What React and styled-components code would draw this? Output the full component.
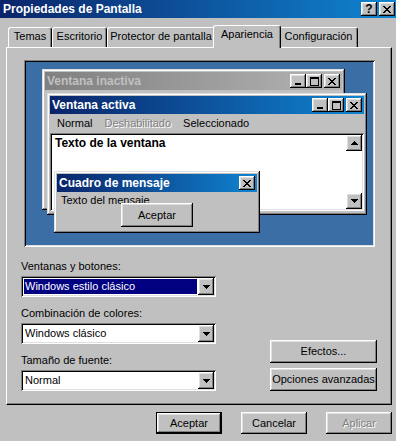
import React from "react";
import styled, { createGlobalStyle, css } from "styled-components";

const GlobalStyle = createGlobalStyle`
  html, body { margin: 0; padding: 0; background: #c0c0c0; }
  body {
    font-family: "Liberation Sans", Arial, sans-serif;
    font-size: 11px;
    line-height: 13px;
    color: #000;
  }
  * { box-sizing: border-box; }
`;

const raisedBevel = css`
  box-shadow: inset -1px -1px #000, inset 1px 1px #fff, inset -2px -2px #808080,
    inset 2px 2px #dfdfdf;
`;
const windowBevel = css`
  box-shadow: inset -1px -1px #000, inset 1px 1px #dfdfdf, inset -2px -2px #808080,
    inset 2px 2px #fff;
`;
const sunkenBevel = css`
  box-shadow: inset 1px 1px #808080, inset -1px -1px #fff, inset 2px 2px #000,
    inset -2px -2px #dfdfdf;
`;

const Dialog = styled.div`
  width: 396px;
  height: 441px;
  overflow: hidden;
  background: #c0c0c0;
  display: flex;
  flex-direction: column;
`;

const TitleBar = styled.div`
  height: 18px;
  flex: none;
  display: flex;
  align-items: center;
  padding: 0 1px 0 3px;
  background: linear-gradient(to right, #0a246a 0%, #1084d0 100%);
`;

const TitleText = styled.div`
  flex: 1;
  color: #fff;
  font-weight: bold;
  font-size: 12px;
  line-height: 14px;
  white-space: nowrap;
`;

const CapButton = styled.div`
  flex: none;
  width: 16px;
  height: 14px;
  margin-left: ${(p) => p.$gap || 0}px;
  background: #c0c0c0;
  ${raisedBevel}
  display: flex;
  align-items: center;
  justify-content: center;
  font-weight: bold;
  font-size: 12px;
  line-height: 12px;
  color: #000;
`;

const TabRow = styled.div`
  flex: none;
  position: relative;
  z-index: 1;
  display: flex;
  align-items: flex-end;
  height: 23px;
  margin-top: 7px;
  padding-left: 8px;
`;

const Tab = styled.div`
  position: relative;
  z-index: ${(p) => (p.$active ? 2 : 1)};
  width: ${(p) => p.$w}px;
  height: ${(p) => (p.$active ? 23 : 20)}px;
  margin: 0 ${(p) => (p.$active ? -2 : 0)}px ${(p) => (p.$active ? 0 : 1)}px;
  padding-top: 2px;
  background: #c0c0c0;
  border-top: 1px solid #fff;
  border-left: 1px solid #fff;
  border-right: 1px solid #000;
  border-radius: 3px 3px 0 0;
  box-shadow: inset -1px 0 #808080;
  text-align: center;
  white-space: nowrap;
`;

const Panel = styled.div`
  flex: none;
  margin: -1px 0 0 6px;
  width: 386px;
  height: 358px;
  border-top: 1px solid #fff;
  border-left: 1px solid #fff;
  border-right: 1px solid #000;
  border-bottom: 1px solid #000;
  box-shadow: inset -1px -1px #808080;
  display: flex;
  flex-direction: column;
`;

const Preview = styled.div`
  flex: none;
  position: relative;
  margin: 12px 0 0 17px;
  width: 351px;
  height: 187px;
  background: #3a6ea5;
  ${sunkenBevel}
`;

const PreviewWindow = styled.div`
  position: absolute;
  left: ${(p) => p.$x}px;
  top: ${(p) => p.$y}px;
  width: ${(p) => p.$w}px;
  height: ${(p) => p.$h}px;
  background: #c0c0c0;
  padding: 3px;
  display: flex;
  flex-direction: column;
  ${windowBevel}
`;

const Caption = styled.div`
  flex: none;
  height: 18px;
  display: flex;
  align-items: center;
  padding: 0 2px 0 2px;
  background: ${(p) =>
    p.$inactive
      ? "linear-gradient(to right, #808080 0%, #b4b4b4 100%)"
      : "linear-gradient(to right, #0a246a 0%, #1084d0 100%)"};
  color: ${(p) => (p.$inactive ? "#c0c0c0" : "#fff")};
  font-weight: bold;
  font-size: 12px;
  line-height: 14px;
  white-space: nowrap;
`;

const CaptionText = styled.div`
  flex: 1;
  overflow: hidden;
`;

const MenuBar = styled.div`
  flex: none;
  height: 18px;
  display: flex;
  align-items: center;
  padding-left: 1px;
`;

const MenuItem = styled.div`
  padding: 0 6px;
  color: ${(p) => (p.$disabled ? "#808080" : "#000")};
  text-shadow: ${(p) => (p.$disabled ? "1px 1px #fff" : "none")};
`;

const TextArea = styled.div`
  flex: 1;
  margin: 1px 0;
  padding: 2px;
  background: #fff;
  display: flex;
  ${sunkenBevel}
`;

const WindowText = styled.div`
  flex: 1;
  padding: 1px 3px;
  font-weight: bold;
  font-size: 12px;
  line-height: 14px;
`;

const ScrollColumn = styled.div`
  flex: none;
  width: 16px;
  display: flex;
  flex-direction: column;
  justify-content: space-between;
`;

const ScrollButton = styled.div`
  width: 16px;
  height: 16px;
  background: #c0c0c0;
  display: flex;
  align-items: center;
  justify-content: center;
  ${raisedBevel}
`;

const MessageBody = styled.div`
  flex: 1;
  display: flex;
  flex-direction: column;
  align-items: center;
`;

const MessageText = styled.div`
  align-self: stretch;
  margin-top: 2px;
  padding-left: 4px;
  white-space: nowrap;
`;

const Button = styled.div`
  flex: none;
  width: ${(p) => p.$w}px;
  height: ${(p) => p.$h}px;
  margin-top: ${(p) => p.$mt || 0}px;
  background: #c0c0c0;
  display: flex;
  align-items: center;
  justify-content: center;
  white-space: nowrap;
  color: ${(p) => (p.$disabled ? "#808080" : "#000")};
  text-shadow: ${(p) => (p.$disabled ? "1px 1px #fff" : "none")};
  ${(p) =>
    p.$default
      ? css`
          box-shadow: inset 0 0 0 1px #000, inset -2px -2px #000, inset 2px 2px #fff,
            inset -3px -3px #808080, inset 3px 3px #dfdfdf;
        `
      : raisedBevel}
`;

const Lower = styled.div`
  flex: none;
  display: grid;
  grid-template-columns: 195px 107px;
  column-gap: 54px;
  align-items: end;
  margin: 13px 0 0 14px;
`;

const FieldColumn = styled.div`
  display: flex;
  flex-direction: column;
  gap: 10px;
`;

const Field = styled.div`
  display: flex;
  flex-direction: column;
  gap: 3px;
`;

const Label = styled.div`
  white-space: nowrap;
`;

const Combo = styled.div`
  height: 21px;
  padding: 2px;
  background: #fff;
  display: flex;
  ${sunkenBevel}
`;

const ComboValue = styled.div`
  flex: 1;
  margin: 1px 1px 1px 1px;
  padding-left: 1px;
  display: flex;
  align-items: center;
  background: ${(p) => (p.$selected ? "#000080" : "transparent")};
  color: ${(p) => (p.$selected ? "#fff" : "#000")};
  white-space: nowrap;
`;

const DropButton = styled.div`
  flex: none;
  width: 16px;
  height: 17px;
  background: #c0c0c0;
  display: flex;
  align-items: center;
  justify-content: center;
  ${raisedBevel}
`;

const ButtonColumn = styled.div`
  display: flex;
  flex-direction: column;
  gap: 5px;
`;

const Footer = styled.div`
  flex: none;
  display: flex;
  justify-content: flex-end;
  gap: 19px;
  padding: 7px 4px 0 0;
`;

const CloseGlyph = () => (
  <svg width="8" height="7" viewBox="0 0 8 7">
    <path
      fill="#000"
      d="M0 0h2v1H0zM6 0h2v1H6zM1 1h2v1H1zM5 1h2v1H5zM2 2h4v1H2zM3 3h2v1H3zM2 4h4v1H2zM1 5h2v1H1zM5 5h2v1H5zM0 6h2v1H0zM6 6h2v1H6z"
    />
  </svg>
);

const MinGlyph = () => (
  <svg width="8" height="9" viewBox="0 0 8 9">
    <rect x="1" y="6" width="6" height="2" fill="#000" />
  </svg>
);

const MaxGlyph = () => (
  <svg width="9" height="9" viewBox="0 0 9 9">
    <path fill="#000" fillRule="evenodd" d="M0 0h9v9H0zM1 2h7v6H1z" />
  </svg>
);

const DownGlyph = () => (
  <svg width="7" height="4" viewBox="0 0 7 4">
    <path fill="#000" d="M0 0h7v1H0zM1 1h5v1H1zM2 2h3v1H2zM3 3h1v1H3z" />
  </svg>
);

const UpGlyph = () => (
  <svg width="7" height="4" viewBox="0 0 7 4">
    <path fill="#000" d="M3 0h1v1H3zM2 1h3v1H2zM1 2h5v1H1zM0 3h7v1H0z" />
  </svg>
);

const tabs = [
  { label: "Temas", w: 44 },
  { label: "Escritorio", w: 55 },
  { label: "Protector de pantalla", w: 108 },
  { label: "Apariencia", w: 68, active: true },
  { label: "Configuración", w: 79 },
];

const fields = [
  { label: "Ventanas y botones:", value: "Windows estilo clásico", selected: true },
  { label: "Combinación de colores:", value: "Windows clásico" },
  { label: "Tamaño de fuente:", value: "Normal" },
];

export default function App() {
  return (
    <>
      <GlobalStyle />
      <Dialog>
        <TitleBar>
          <TitleText>Propiedades de Pantalla</TitleText>
          <CapButton>?</CapButton>
          <CapButton $gap={2}>
            <CloseGlyph />
          </CapButton>
        </TitleBar>

        <TabRow>
          {tabs.map((t) => (
            <Tab key={t.label} $w={t.w} $active={t.active}>
              {t.label}
            </Tab>
          ))}
        </TabRow>

        <Panel>
          <Preview>
            <PreviewWindow $x={18} $y={9} $w={303} $h={141}>
              <Caption $inactive>
                <CaptionText>Ventana inactiva</CaptionText>
                <CapButton>
                  <MinGlyph />
                </CapButton>
                <CapButton>
                  <MaxGlyph />
                </CapButton>
                <CapButton $gap={2}>
                  <CloseGlyph />
                </CapButton>
              </Caption>
            </PreviewWindow>

            <PreviewWindow $x={23} $y={33} $w={320} $h={122}>
              <Caption>
                <CaptionText>Ventana activa</CaptionText>
                <CapButton>
                  <MinGlyph />
                </CapButton>
                <CapButton>
                  <MaxGlyph />
                </CapButton>
                <CapButton $gap={2}>
                  <CloseGlyph />
                </CapButton>
              </Caption>
              <MenuBar>
                <MenuItem>Normal</MenuItem>
                <MenuItem $disabled>Deshabilitado</MenuItem>
                <MenuItem>Seleccionado</MenuItem>
              </MenuBar>
              <TextArea>
                <WindowText>Texto de la ventana</WindowText>
                <ScrollColumn>
                  <ScrollButton>
                    <UpGlyph />
                  </ScrollButton>
                  <ScrollButton>
                    <DownGlyph />
                  </ScrollButton>
                </ScrollColumn>
              </TextArea>
            </PreviewWindow>

            <PreviewWindow $x={30} $y={111} $w={206} $h={62}>
              <Caption>
                <CaptionText>Cuadro de mensaje</CaptionText>
                <CapButton>
                  <CloseGlyph />
                </CapButton>
              </Caption>
              <MessageBody>
                <MessageText>Texto del mensaje</MessageText>
                <Button $w={72} $h={24} $mt={-4}>
                  Aceptar
                </Button>
              </MessageBody>
            </PreviewWindow>
          </Preview>

          <Lower>
            <FieldColumn>
              {fields.map((f) => (
                <Field key={f.label}>
                  <Label>{f.label}</Label>
                  <Combo>
                    <ComboValue $selected={f.selected}>{f.value}</ComboValue>
                    <DropButton>
                      <DownGlyph />
                    </DropButton>
                  </Combo>
                </Field>
              ))}
            </FieldColumn>
            <ButtonColumn>
              <Button $w={107} $h={23}>
                Efectos...
              </Button>
              <Button $w={107} $h={23}>
                Opciones avanzadas
              </Button>
            </ButtonColumn>
          </Lower>
        </Panel>

        <Footer>
          <Button $w={66} $h={22} $default>
            Aceptar
          </Button>
          <Button $w={66} $h={22}>
            Cancelar
          </Button>
          <Button $w={66} $h={22} $disabled>
            Aplicar
          </Button>
        </Footer>
      </Dialog>
    </>
  );
}
